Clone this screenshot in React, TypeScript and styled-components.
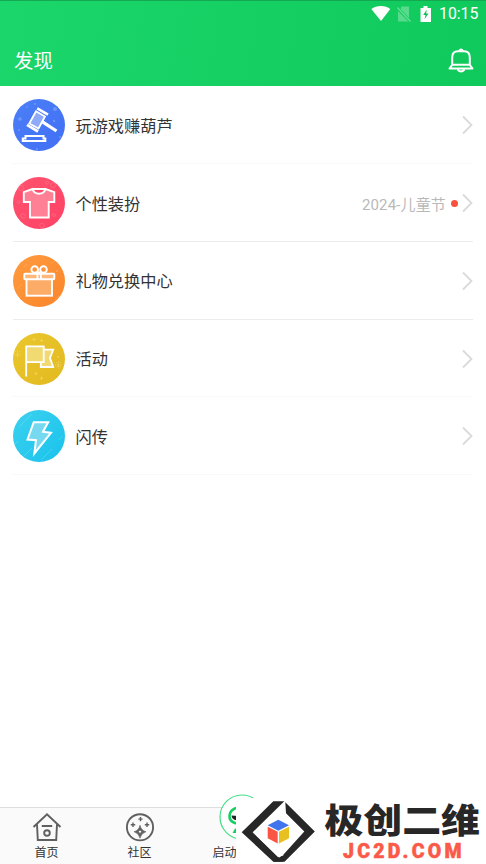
import React from 'react';
import styled, { createGlobalStyle } from 'styled-components';

const Global = createGlobalStyle`
  * { box-sizing: border-box; }
  body { margin: 0; background: #fff; overflow: hidden; }
`;
const Screen = styled.div`
  position: relative;
  display: flex;
  flex-direction: column;
  width: 486px;
  height: 864px;
  overflow: hidden;
  background: #fff;
  color: #333;
  font-family: Roboto, "Noto Sans CJK SC", sans-serif;
  svg { display: block; flex: none; }
`;
const Header = styled.header`
  flex: none;
  height: 86px;
  background: linear-gradient(100deg, #1bd66a, #0fc95c);
  border-top: 1px solid #13a852;
  color: #fff;
`;
const StatusBar = styled.div`
  display: flex;
  align-items: center;
  height: 25px;
  padding-right: 8px;
  justify-content: flex-end;
`;
const SimSlot = styled.span`
  margin: 0 8px 0 5px;
`;
const Time = styled.span`
  width: 39px;
  margin-left: 7px;
  font-size: 15.8px;
  line-height: 25px;
  white-space: nowrap;
`;
const TitleBar = styled.div`
  display: flex;
  align-items: center;
  justify-content: space-between;
  height: 60px;
  padding: 9px 12px 0 14px;
`;
const Title = styled.h1`
  margin: 2px 0 0;
  font-size: 19.4px;
  line-height: 28px;
  font-weight: 400;
`;
const List = styled.main`
  flex: 1;
  padding: 0.4px 13px 0;
`;
const Row = styled.div<{ $faint?: boolean }>`
  display: flex;
  align-items: center;
  height: 77.75px;
  padding-top: 1px;
  border-bottom: 1px solid ${p => (p.$faint ? '#f8f8f8' : '#ececec')};
`;
const Label = styled.span`
  flex: 1;
  margin: 3px 0 0 10.5px;
  font-size: 16.2px;
  line-height: 24px;
`;
const Note = styled.span`
  color: #b9b9b9;
  font-size: 15px;
  letter-spacing: 0.15px;
`;
const Dot = styled.i`
  width: 7px;
  height: 7px;
  margin: 0 4px 0 5px;
  border-radius: 50%;
  background: #f9513b;
`;
const Nav = styled.nav`
  display: grid;
  grid-template-columns: 93px 93px 114px 93px 93px;
  height: 57px;
  border-top: 1px solid #dedede;
  background: #fafafa;
`;
const Tab = styled.div`
  display: flex;
  flex-direction: column;
  align-items: center;
  padding-top: 4px;
  font-size: 12px;
  line-height: 18px;
  svg { margin-bottom: 2px; }
`;
const LaunchTab = styled(Tab)`
  align-items: flex-start;
  padding: 0 0 0 33px;
  svg { margin: -14px 0 4px 0; }
  span { margin-left: -6.5px; }
`;
const Watermark = styled.div`
  position: absolute;
  right: 0;
  bottom: 0;
  width: 250px;
  height: 66px;
  background: #fff;
  svg { overflow: visible; }
`;

const Wifi = () => (
  <svg width="20" height="17" viewBox="0 0 20 17"><path d="M.3 4.1C5.5-.2 14.5-.2 19.3 4.1L10 16z" fill="#fff" /></svg>
);
const NoSim = () => (
  <svg width="16" height="18" viewBox="0 0 16 18">
    <path d="M5.500 1.500H13V13L4.500 4zM2 6 12.500 16.500H2z" fill="#58da8c" />
    <path d="M1.300 2.500 14.500 16.500" stroke="#69df98" strokeWidth="1.200" />
  </svg>
);
const Battery = () => (
  <svg width="12" height="16" viewBox="0 0 12 16">
    <path d="M3.500 0h4v2H11v14H.5V2h3z" fill="#fff" />
    <path d="M6.800 3.500 3.200 9H5.500L4.500 13.300 8.500 7.500H6.100z" fill="#13bd59" />
  </svg>
);
const Bell = () => (
  <svg width="26" height="27" viewBox="0 0 26 27" fill="none" stroke="#fff" strokeWidth="2">
    <path d="M4.200 18V10.500Q4.200 4.300 10 4.300H16Q21.800 4.300 21.800 10.500V18M4.200 17.800H21.800L24.500 21.500H1.500zM11 4Q13 .8 15 4M9.500 22.500Q13 26.500 16.500 22.500" strokeLinejoin="round" />
  </svg>
);
const Chevron = () => (
  <svg width="11" height="20" viewBox="0 0 11 20"><path d="M1 1.500 9.500 10 1 18.500" fill="none" stroke="#dadada" strokeWidth="1.800" /></svg>
);

type Kind = 'gavel' | 'shirt' | 'gift' | 'flag' | 'bolt';
const fills: Record<Kind, [string, string]> = {
  gavel: ['#4b7ff7', '#416ff5'],
  shirt: ['#ff526f', '#ff4366'],
  gift: ['#ff9b40', '#fb8529'],
  flag: ['#eac62d', '#e2ba20'],
  bolt: ['#3dd1ef', '#19c2ec'],
};
const specks: Record<Kind, React.ReactNode> = {
  gavel: (
    <g fill="#fff" fillOpacity=".22" stroke="none">
      <circle cx="7" cy="20" r="1.800" /><circle cx="42" cy="10" r="2" /><circle cx="22" cy="5" r="1" />
      <circle cx="6" cy="31" r="1" /><circle cx="41" cy="22" r="1.200" /><circle cx="24" cy="50" r="1.100" /><circle cx="14" cy="8" r=".8" />
      <circle cx="47" cy="38" r="1" />
    </g>
  ),
  shirt: (
    <g stroke="#ff8093" strokeWidth=".8" opacity=".6">
      <circle cx="8" cy="11" r="2.500" /><circle cx="40" cy="8" r="2.500" /><circle cx="34" cy="5.500" r="1.500" />
      <circle cx="5.500" cy="25" r="1.300" /><circle cx="10" cy="39" r="2.300" /><circle cx="29" cy="48.500" r="2.300" /><circle cx="41" cy="38" r="1.500" />
    </g>
  ),
  gift: (
    <g stroke="#ffc184" strokeWidth=".8" opacity=".45"><path d="M11 12 14 9M38 9 42 5M43 17 45 15M4 34 9 29M42 45 46 41" /><circle cx="44" cy="16" r=".5" /></g>
  ),
  flag: (
    <g stroke="#f4df77" strokeWidth=".8" opacity=".7">
      <path d="M21 4.500V8M19.300 6.200H22.700M28.500 6V9M27 7.500H30M23 39V42M21.500 40.500H24.500M28.500 43.500V47M26.800 45.200H30.200" />
      <path d="M1 21H8M4.500 17V25M2 18 7 24M7 18 2 24M42 32H49M45.500 28V36M43 29 48 35M48 29 43 35" strokeDasharray="1.500 1" />
      <circle cx="45" cy="24" r=".6" />
    </g>
  ),
  bolt: <path d="M6 17 19 4M11 46 19 38M28 50 39 39M2 34 5 31M46 30 50 26" stroke="#83e3f5" strokeWidth=".8" opacity=".5" />,
};
const drawings: Record<Kind, React.ReactNode> = {
  gavel: (
    <g>
      <path d="M23 12.200 32 17.500 25.500 29.500 16.300 24.500z" fill="#8eaaf9" strokeWidth="1.800" />
      <path d="M24.200 9.300 35 15.700M14 25.800 25 32.500" strokeWidth="2.700" />
      <path d="M29.500 22.800 43.500 32" strokeWidth="3.200" />
      <path d="M12.500 37H30.500V39.500H32.300V42H9.800V39.500H12.500z" strokeWidth="2" />
    </g>
  ),
  shirt: <path d="M19.500 12 10.800 15.200V25H17V40.500H35.700V25H41.300V15.200L32.500 12Q31 16.700 26 16.700T19.500 12zM19.500 12H32.500" fill="#ff7f94" strokeWidth="1.900" />,
  gift: (
    <g strokeWidth="1.900">
      <rect x="13.500" y="24" width="25.500" height="16.700" fill="#fdac68" />
      <rect x="11.300" y="18.800" width="30" height="5.500" rx=".8" fill="#ffb77c" />
      <path d="M24.500 19V24M27.900 19V24" />
      <circle cx="21.700" cy="14.500" r="3.300" /><circle cx="30.500" cy="14.500" r="3.300" />
      <path d="M24.500 16.500 26 18.500 27.500 16.500" />
    </g>
  ),
  flag: <path d="M30.500 16.700H40.200L37 25 40.200 34H27.800V29M13 13.300H30.700V29.200H13M13.200 12.500V43.500" fill="#f1da72" strokeWidth="1.800" />,
  bolt: <path d="M20.700 12.200H35.200L30 21.800 38 22.800 21.300 43.500 23 30.200 14.500 29.500z" fill="#77d9f0" strokeWidth="2" />,
};
const RowIcon = ({ kind }: { kind: Kind }) => (
  <svg width="52" height="52" viewBox="0 0 52 52" fill="none" stroke="#fff">
    <defs>
      <linearGradient id={kind} x1="0" y1="0" x2="1" y2="1">
        <stop stopColor={fills[kind][0]} /><stop offset="1" stopColor={fills[kind][1]} />
      </linearGradient>
    </defs>
    <circle cx="26" cy="26" r="26" fill={`url(#${kind})`} stroke="none" />
    {specks[kind]}
    {drawings[kind]}
  </svg>
);
const rows: { kind: Kind; text: string; note?: string; faint?: boolean }[] = [
  { kind: 'gavel', text: '玩游戏赚葫芦', faint: true },
  { kind: 'shirt', text: '个性装扮', note: '2024-儿童节' },
  { kind: 'gift', text: '礼物兑换中心' },
  { kind: 'flag', text: '活动', faint: true },
  { kind: 'bolt', text: '闪传', faint: true },
];

const Home = () => (
  <svg width="30" height="30" viewBox="0 0 30 30" fill="none" stroke="#606060" strokeWidth="1.900">
    <path d="M1.500 15 15 2.200 28.500 15M5 12.500 5.800 28H24.200L25 12.500M9.800 14H20.200" />
    <circle cx="15" cy="21" r="2.800" />
  </svg>
);
const Community = () => (
  <svg width="30" height="30" viewBox="0 0 30 30" fill="none" stroke="#606060" strokeWidth="1.900">
    <circle cx="15" cy="15.300" r="13.100" />
    <path d="M15.500 5V9.200M13.400 7.100H17.600M8 10.500V14.900M5.800 12.700H10.200M22 10.500V14.900M19.800 12.700H24.200" strokeWidth="1.400" />
    <path fillRule="evenodd" d="M15 13.200Q16.200 18.500 21 19.700 16.200 21 15 26.200 13.800 21 9 19.700 13.800 18.500 15 13.200zM15 18 13.300 19.700 15 21.400 16.700 19.700z" fill="#606060" stroke="#606060" strokeWidth=".6" />
  </svg>
);
const Launch = () => (
  <svg width="46" height="46" viewBox="0 0 46 46" fill="none">
    <circle cx="23" cy="23" r="22" fill="#fff" stroke="#44df86" strokeWidth="1.200" />
    <path d="M19 13.500C8 16 8 27 17 29.500" stroke="#16cf62" strokeWidth="2.600" />
    <path d="M12.500 21.500 19 22V26H16Q13 25 12.500 21.500" fill="#222" />
    <path d="M13.500 39 16 34.500H22V39z" fill="#16cf62" />
  </svg>
);
const Brand = () => (
  <svg width="250" height="66" viewBox="0 -1 250 66">
    <path d="M5.700 33.300 37.300 2.300H48.300L16.700 33.300 47.300 62.700H37.300z" fill="#272727" />
    <path d="M49.300 3.300 78.800 32.500 48.500 62.700H37.300L47.500 55.500 68.300 32.500 50 14.300z" fill="#272727" />
    <path d="M16.700 33.300 47.300 54.500V56.500L42 58z" fill="#fff" />
    <path d="M42.300 20.800 53 26.300 42.300 31.800 31.700 26.300z" fill="#4274ed" />
    <path d="M31.700 27.800 41.700 32.800V44.500L31.700 39.300z" fill="#fa5544" />
    <path d="M43 32.800 53 27.800V39.300L43 44.500z" fill="#e8c020" />
    <text x="88.500" y="34" textLength="155.500" lengthAdjust="spacingAndGlyphs" fill="#272727" fontFamily="'Noto Sans CJK SC', sans-serif" fontSize="34" fontWeight="900">极创二维</text>
    <text x="107" y="58.500" textLength="118.500" lengthAdjust="spacing" fill="#fb5a49" stroke="#fb5a49" strokeWidth=".5" fontFamily="Roboto, sans-serif" fontSize="19.500" fontWeight="900">JC2D.COM</text>
  </svg>
);

export default function App() {
  return (
    <Screen>
      <Global />
      <Header>
        <StatusBar>
          <Wifi />
          <SimSlot><NoSim /></SimSlot>
          <Battery />
          <Time>10:15</Time>
        </StatusBar>
        <TitleBar><Title>发现</Title><Bell /></TitleBar>
      </Header>
      <List>
        {rows.map(r => (
          <Row key={r.kind} $faint={r.faint}>
            <RowIcon kind={r.kind} />
            <Label>{r.text}</Label>
            {r.note && <><Note>{r.note}</Note><Dot /></>}
            <Chevron />
          </Row>
        ))}
      </List>
      <Nav>
        <Tab><Home /><span>首页</span></Tab>
        <Tab><Community /><span>社区</span></Tab>
        <LaunchTab><Launch /><span>启动</span></LaunchTab>
      </Nav>
      <Watermark><Brand /></Watermark>
    </Screen>
  );
}
